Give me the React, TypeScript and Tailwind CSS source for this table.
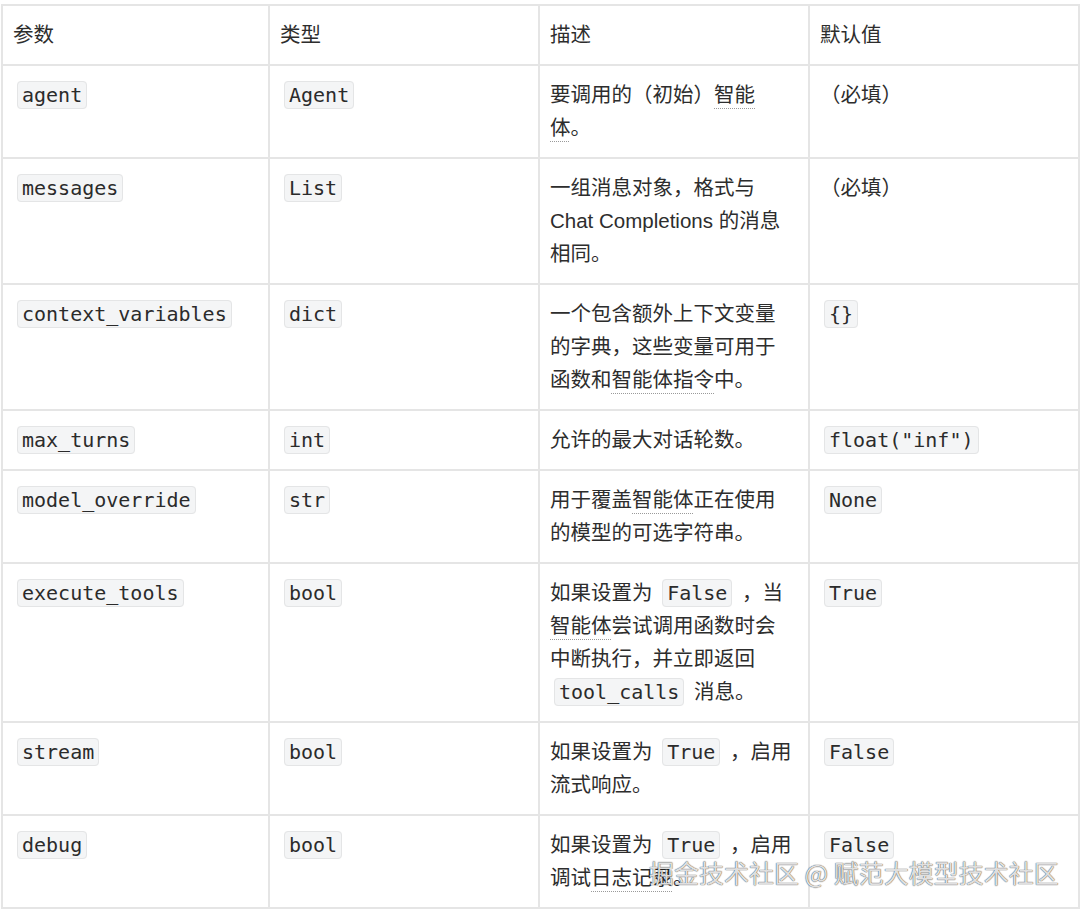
import type { ReactNode } from "react";

const Code = ({ children }: { children: ReactNode }) => (
  <code className="mx-[4px] rounded-[4px] border border-[#e4e5e6] bg-[#f4f5f6] px-[4px] py-[1px] font-['DejaVu_Sans_Mono',monospace] text-[20px] leading-none text-[#2b2b2b]">
    {children}
  </code>
);

const Term = ({ children }: { children: ReactNode }) => (
  <span className="underline decoration-dotted decoration-[#9a9a9a] decoration-1 underline-offset-[6px]">
    {children}
  </span>
);

type Row = { name: string; type: string; desc: ReactNode; def: ReactNode };

const ROWS: Row[] = [
  { name: "agent", type: "Agent", desc: <>要调用的（初始）<Term>智能体</Term>。</>, def: "（必填）" },
  {
    name: "messages",
    type: "List",
    desc: <>一组消息对象，格式与 Chat Completions 的消息相同。</>,
    def: "（必填）",
  },
  {
    name: "context_variables",
    type: "dict",
    desc: <>一个包含额外上下文变量的字典，这些变量可用于函数和<Term>智能体指令</Term>中。</>,
    def: <Code>{"{}"}</Code>,
  },
  { name: "max_turns", type: "int", desc: <>允许的最大对话轮数。</>, def: <Code>float("inf")</Code> },
  {
    name: "model_override",
    type: "str",
    desc: <>用于覆盖<Term>智能体</Term>正在使用的模型的可选字符串。</>,
    def: <Code>None</Code>,
  },
  {
    name: "execute_tools",
    type: "bool",
    desc: (
      <>
        如果设置为 <Code>False</Code> ，当<Term>智能体</Term>尝试调用函数时会中断执行，并立即返回 <Code>tool_calls</Code> 消息。
      </>
    ),
    def: <Code>True</Code>,
  },
  {
    name: "stream",
    type: "bool",
    desc: <>如果设置为 <Code>True</Code> ，启用流式响应。</>,
    def: <Code>False</Code>,
  },
  {
    name: "debug",
    type: "bool",
    desc: <>如果设置为 <Code>True</Code> ，启用调试<Term>日志记录</Term>。</>,
    def: <Code>False</Code>,
  },
];

const cell = "border-2 border-[#e5e5e5] pl-[10px] pr-[14px] pt-[12px] pb-[13px] align-top";

export default function App() {
  return (
    <div className="relative h-[910px] w-[1080px] overflow-hidden bg-white pl-[1px] pt-[4px] font-['Liberation_Sans','Noto_Sans_CJK_SC',sans-serif] text-[20.5px] leading-[33px] text-[#2d2d2d]">
      <table className="w-[1077px] table-fixed border-collapse">
        <colgroup>
          <col className="w-[267px]" />
          <col className="w-[270px]" />
          <col className="w-[270px]" />
          <col className="w-[270px]" />
        </colgroup>
        <thead>
          <tr>
            <th className={`${cell} text-left font-normal`}>参数</th>
            <th className={`${cell} text-left font-normal`}>类型</th>
            <th className={`${cell} text-left font-normal`}>描述</th>
            <th className={`${cell} text-left font-normal`}>默认值</th>
          </tr>
        </thead>
        <tbody>
          {ROWS.map((r) => (
            <tr key={r.name}>
              <td className={cell}>
                <Code>{r.name}</Code>
              </td>
              <td className={cell}>
                <Code>{r.type}</Code>
              </td>
              <td className={cell}>{r.desc}</td>
              <td className={cell}>{r.def}</td>
            </tr>
          ))}
        </tbody>
      </table>

      {/* watermark */}
      <div className="pointer-events-none absolute left-[649px] top-[855px] font-['Noto_Sans_CJK_SC',sans-serif] text-[25px] leading-[34px] text-white/85 [text-shadow:0_0_1px_rgba(0,0,0,0.75),0_0_1px_rgba(0,0,0,0.5)]">
        掘金技术社区 @ 赋范大模型技术社区
      </div>
    </div>
  );
}
